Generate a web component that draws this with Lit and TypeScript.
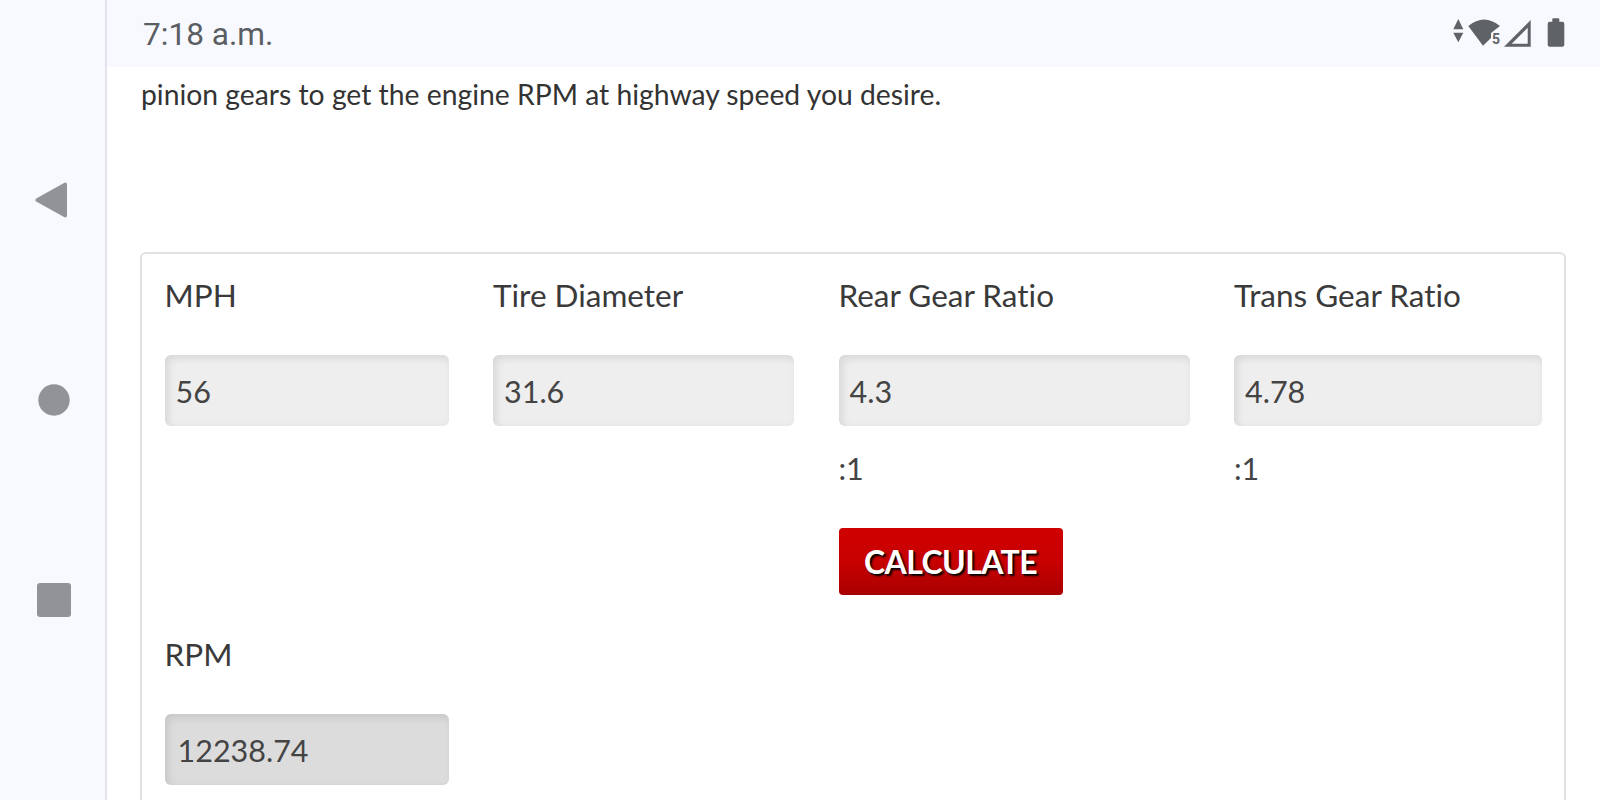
import { LitElement, html, css } from "lit";
import { customElement } from "lit/decorators.js";

@customElement("app-root")
export class AppRoot extends LitElement {
  static styles = css`
    :host { display: block; width: 1600px; height: 800px; overflow: hidden; background: #fff; font-family: Lato, sans-serif; color: #3a3a3a; font-variant-ligatures: none; }
    .shell { display: flex; height: 800px; }
    .rail { width: 103px; flex: none; background: #f8f9fe; border-right: 2px solid #e3e4ee; display: flex; flex-direction: column; align-items: center; padding-top: 182px; padding-left: 2px; box-sizing: content-box; }
    .rail svg { display: block; fill: #929396; }
    .back { margin-left: -5px; }
    .home { margin-top: 166px; }
    .recent { margin-top: 167px; }
    .main { flex: 1; min-width: 0; display: flex; flex-direction: column; }
    .status { height: 67px; flex: none; background: #f8f9fe; display: flex; align-items: center; justify-content: space-between; padding: 2px 33px 0 36px; box-sizing: border-box; font-family: Roboto, sans-serif; font-size: 31.6px; font-weight: 400; color: #5a5e63; }
    .status svg { display: block; margin-top: -3px; }
    .status text { font-family: Roboto, sans-serif; font-size: 14px; font-weight: 700; fill: #5f6368; }
    .intro { margin: 0 0 0 34px; font-size: 28.3px; line-height: 54px; height: 202px; color: #333; }
    .card { margin: 0 34px 0 33px; box-sizing: border-box; height: 600px; border: 2px solid #e2e2e2; border-bottom: 0; border-radius: 6px 6px 0 0; padding: 0 0 0 22.5px; }
    .grid { display: grid; grid-template-columns: 284px 301px 351px 308px; column-gap: 44.5px; }
    .label { font-size: 31.5px; line-height: 40px; margin-top: 21px; height: 80px; color: #3a3a3a; }
    .value { box-sizing: border-box; height: 71px; border-radius: 6px; background: #eee; box-shadow: inset 3px 3px 9px rgba(0,0,0,.1); padding: 0 11px; font-size: 30.5px; line-height: 73px; color: #444; }
    .ratio { font-size: 30.5px; line-height: 40px; margin-top: 22px; color: #444; }
    .calc { display: block; margin-top: 40px; width: 224px; height: 67px; border: 0; padding: 0; border-radius: 4px; background: linear-gradient(#cf0000 0%, #c80000 50%, #a80000 100%); color: #fff; font-family: Lato, sans-serif; font-weight: 700; font-size: 32px; text-shadow: 2px 2px 2px #000; letter-spacing: -0.6px; }
    .rpm { margin-top: 39px; }
    .rpm .label { margin-top: 0; height: 80px; }
    .rpm .value { width: 284px; background: #dcdcdc; padding-left: 13px; }
  `;

  render() {
    const fields = [
      { label: "MPH", value: "56" },
      { label: "Tire Diameter", value: "31.6" },
      { label: "Rear Gear Ratio", value: "4.3", ratio: true, button: true },
      { label: "Trans Gear Ratio", value: "4.78", ratio: true },
    ];
    return html`
      <div class="shell">
        <nav class="rail">
          <svg class="back" width="32" height="36" viewBox="0 0 32 36"><path d="M29.5 .8 C30.8 .2 32 1 32 2.5 V33.5 C32 35 30.8 35.8 29.5 35.2 L1.2 19.6 C.1 19 .1 17 1.2 16.4 Z"/></svg>
          <svg class="home" width="32" height="32" viewBox="0 0 32 32"><circle cx="16" cy="16" r="15.7"/></svg>
          <svg class="recent" width="34" height="34" viewBox="0 0 34 34"><rect width="34" height="34" rx="3"/></svg>
        </nav>
        <div class="main">
          <header class="status">
            <span>7:18 a.m.</span>
            <svg width="116" height="34" viewBox="1451 16 116 34">
              <path fill="#5f6368" d="M1458.3 19 L1463.3 29.3 H1453.3 Z M1458.3 42.3 L1463.3 32.7 H1453.3 Z"/>
              <path fill="#5f6368" d="M1468.3 26 Q1484 13 1500 26 L1491 33 V38 L1483 45.7 Z"/>
              <text x="1492" y="43.5">5</text>
              <path fill="#5f6368" fill-rule="evenodd" d="M1504 46.7 L1530.7 20 V46.7 Z M1511.7 43.7 H1527.7 V27.7 Z"/>
              <path fill="#5f6368" d="M1552.3 21.7 V19.3 Q1552.3 18.3 1553.3 18.3 H1558.3 Q1559.3 18.3 1559.3 19.3 V21.7 H1562.3 Q1564.3 21.7 1564.3 23.7 V44.7 Q1564.3 46.7 1562.3 46.7 H1549.7 Q1547.7 46.7 1547.7 44.7 V23.7 Q1547.7 21.7 1549.7 21.7 Z"/>
            </svg>
          </header>
          <p class="intro">pinion gears to get the engine RPM at highway speed you desire.</p>
          <section class="card">
            <div class="grid">
              ${fields.map((f) => html`
                <div class="field">
                  <div class="label">${f.label}</div>
                  <div class="value">${f.value}</div>
                  ${f.ratio ? html`<div class="ratio">:1</div>` : ""}
                  ${f.button ? html`<button class="calc">CALCULATE</button>` : ""}
                </div>
              `)}
            </div>
            <div class="rpm">
              <div class="label">RPM</div>
              <div class="value">12238.74</div>
            </div>
          </section>
        </div>
      </div>
    `;
  }
}
